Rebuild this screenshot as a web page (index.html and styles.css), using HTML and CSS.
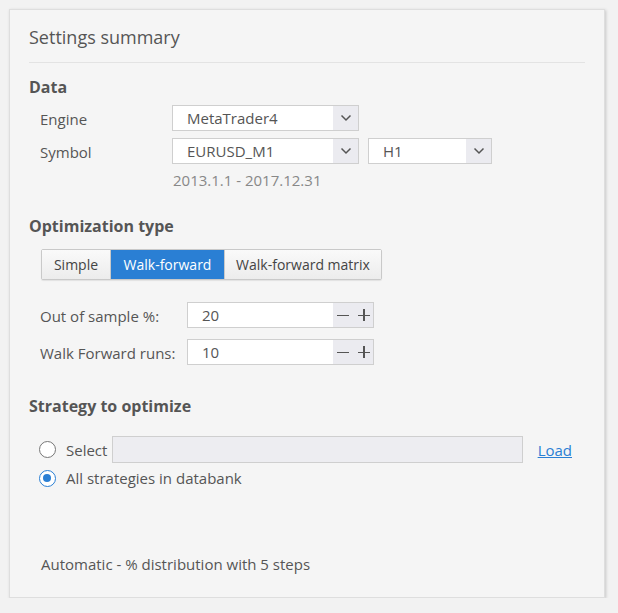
FILE: index.html
```html
<!DOCTYPE html>
<html>
<head>
<meta charset="utf-8">
<link rel="stylesheet" href="styles.css">
</head>
<body>
<div class="card">
  <div class="title">Settings summary</div>

  <div class="heading h-data">Data</div>
  <div class="row">
    <div class="label">Engine</div>
    <div class="select w-engine"><span class="val">MetaTrader4</span><span class="arrow"><svg width="12" height="8" viewBox="0 0 12 8"><path d="M1.5 1.5 L6 6 L10.5 1.5" fill="none" stroke="#555" stroke-width="1.5"/></svg></span></div>
  </div>
  <div class="row row2">
    <div class="label">Symbol</div>
    <div class="select w-engine"><span class="val">EURUSD_M1</span><span class="arrow"><svg width="12" height="8" viewBox="0 0 12 8"><path d="M1.5 1.5 L6 6 L10.5 1.5" fill="none" stroke="#555" stroke-width="1.5"/></svg></span></div>
    <div class="select w-tf"><span class="val">H1</span><span class="arrow"><svg width="12" height="8" viewBox="0 0 12 8"><path d="M1.5 1.5 L6 6 L10.5 1.5" fill="none" stroke="#555" stroke-width="1.5"/></svg></span></div>
  </div>
  <div class="dates">2013.1.1 - 2017.12.31</div>

  <div class="heading h-opt">Optimization type</div>
  <div class="btngroup">
    <div class="btn b-simple">Simple</div>
    <div class="btn b-wf active">Walk-forward</div>
    <div class="btn b-wfm">Walk-forward matrix</div>
  </div>

  <div class="srow s1">
    <div class="slabel">Out of sample %:</div>
    <div class="spin"><span class="val">20</span><span class="pm"><span class="minus"></span><span class="plus"></span></span></div>
  </div>
  <div class="srow s2">
    <div class="slabel">Walk Forward runs:</div>
    <div class="spin"><span class="val">10</span><span class="pm"><span class="minus"></span><span class="plus"></span></span></div>
  </div>

  <div class="heading h-strat">Strategy to optimize</div>
  <div class="rrow r1">
    <span class="radio"></span>
    <span class="rlabel">Select</span>
    <div class="field"></div>
    <a class="load">Load</a>
  </div>
  <div class="rrow r2">
    <span class="radio checked"></span>
    <span class="rlabel">All strategies in databank</span>
  </div>

  <div class="footer">Automatic - % distribution with 5 steps</div>
</div>
</body>
</html>
```
FILE: styles.css
```css
html, body {
  margin: 0;
  padding: 0;
  background: #f2f2f2;
  font-family: "Open Sans", "Noto Sans", sans-serif;
  color: #555;
}
body {
  padding: 9px 0 0 9px;
}
.card {
  box-sizing: border-box;
  width: 596px;
  height: 589px;
  background: #f5f5f5;
  border: 1px solid #dedede;
  box-shadow: 1px 1px 3px rgba(0,0,0,0.18);
  padding: 15px 19px 0 19px;
}
.title {
  font-size: 18px;
  line-height: 25px;
  padding-bottom: 12px;
  border-bottom: 1px solid #e3e3e3;
  color: #555;
}
.heading {
  font-size: 16px;
  font-weight: 700;
  line-height: 20px;
  color: #555;
}
.h-data { margin-top: 14px; }
.h-opt { margin-top: 26px; }
.h-strat { margin-top: 31px; }

.row {
  display: flex;
  align-items: center;
  margin-top: 8px;
  padding-left: 11px;
}
.row2 { margin-top: 7px; }
.label {
  width: 132px;
  font-size: 15px;
  padding-top: 2px;
}
.select {
  box-sizing: border-box;
  height: 26px;
  border: 1px solid #cfcfcf;
  background: #fff;
  display: flex;
  align-items: stretch;
}
.w-engine { width: 187px; }
.w-tf { width: 124px; margin-left: 9px; }
.select .val {
  flex: 1;
  font-size: 15px;
  line-height: 25px;
  padding-left: 14px;
}
.select .arrow {
  width: 25px;
  background: #ebebf0;
  display: flex;
  align-items: center;
  justify-content: center;
}
.dates {
  margin-top: 6px;
  padding-left: 144px;
  font-size: 15px;
  line-height: 20px;
  color: #888;
}

.btngroup {
  display: flex;
  margin-top: 13px;
  margin-left: 12px;
  height: 31px;
  box-sizing: border-box;
  border: 1px solid #c9c9c9;
  border-radius: 2px;
  width: 341px;
  box-shadow: 0 1px 1px rgba(0,0,0,0.08);
}
.btn {
  box-sizing: border-box;
  font-size: 14px;
  line-height: 29px;
  text-align: center;
  background: linear-gradient(#fafafa, #ececec);
  color: #444;
  white-space: nowrap;
}
.b-simple { width: 69px; border-right: 1px solid #c9c9c9; }
.b-wf { width: 113px; }
.b-wfm { flex: 1; border-left: 1px solid #c9c9c9; }
.btn.active {
  background: #2a7fd4;
  color: #fff;
}

.srow {
  display: flex;
  align-items: center;
  padding-left: 11px;
}
.s1 { margin-top: 22px; }
.s2 { margin-top: 11px; }
.slabel {
  width: 147px;
  font-size: 15px;
  padding-top: 2px;
}
.spin {
  box-sizing: border-box;
  width: 187px;
  height: 26px;
  border: 1px solid #cfcfcf;
  background: #fff;
  display: flex;
}
.spin .val {
  flex: 1;
  font-size: 15px;
  line-height: 25px;
  padding-left: 14px;
}
.spin .pm {
  width: 40px;
  background: #ebebf0;
  display: flex;
  align-items: center;
  justify-content: center;
  gap: 9px;
}
.minus, .plus {
  position: relative;
  width: 12px;
  height: 12px;
  display: inline-block;
}
.minus::before, .plus::before, .plus::after {
  content: "";
  position: absolute;
  background: #555;
}
.minus::before, .plus::before {
  left: 0;
  top: 5.5px;
  width: 12px;
  height: 1.5px;
}
.plus::after {
  left: 5.5px;
  top: 0;
  width: 1.5px;
  height: 12px;
}

.rrow {
  display: flex;
  align-items: center;
  padding-left: 10px;
  padding-right: 13px;
}
.r1 { margin-top: 20px; }
.r2 { margin-top: 5px; }
.radio {
  box-sizing: border-box;
  width: 17px;
  height: 17px;
  border-radius: 50%;
  border: 1.5px solid #777;
  background: #fff;
  position: relative;
  flex: none;
}
.radio.checked {
  border: 1.5px solid #2a7fd4;
}
.radio.checked::after {
  content: "";
  position: absolute;
  left: 3px;
  top: 3px;
  width: 8px;
  height: 8px;
  border-radius: 50%;
  background: #2a7fd4;
}
.rlabel {
  font-size: 15px;
  margin-left: 10px;
  line-height: 20px;
}
.field {
  box-sizing: border-box;
  flex: 1;
  height: 27px;
  margin-left: 5px;
  border: 1px solid #cfcfcf;
  background: #ededf1;
}
.load {
  margin-left: 15px;
  font-size: 15px;
  color: #2a7fd4;
  text-decoration: underline;
}
.footer {
  margin-top: 66px;
  padding-left: 12px;
  font-size: 15px;
  line-height: 20px;
}
```
